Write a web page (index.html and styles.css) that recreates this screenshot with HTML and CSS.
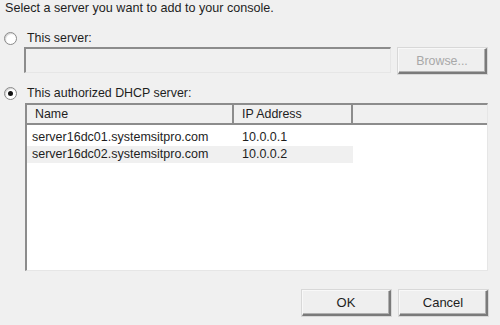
FILE: index.html
```html
<!DOCTYPE html>
<html>
<head>
<meta charset="utf-8">
<link rel="stylesheet" href="styles.css">
</head>
<body>
<div class="dialog">
  <div class="prompt">Select a server you want to add to your console.</div>

  <div class="radio-row first">
    <span class="radio"></span>
    <span class="label">This server:</span>
  </div>
  <div class="server-row">
    <div class="textbox"></div>
    <div class="btn disabled browse">Browse...</div>
  </div>

  <div class="radio-row second">
    <span class="radio checked"></span>
    <span class="label">This authorized DHCP server:</span>
  </div>

  <div class="listview">
    <div class="lv-header">
      <div class="col name">Name</div>
      <div class="col ip">IP Address</div>
      <div class="col rest"></div>
    </div>
    <div class="lv-body">
      <div class="lv-row">
        <div class="cell name">server16dc01.systemsitpro.com</div>
        <div class="cell ip">10.0.0.1</div>
      </div>
      <div class="lv-row alt">
        <div class="cell name">server16dc02.systemsitpro.com</div>
        <div class="cell ip">10.0.0.2</div>
      </div>
    </div>
  </div>

  <div class="actions">
    <div class="btn ok">OK</div>
    <div class="btn cancel">Cancel</div>
  </div>
</div>
</body>
</html>
```

FILE: styles.css
```css
html, body {
  margin: 0;
  padding: 0;
  background: #f0f0f0;
}
body {
  width: 500px;
  height: 325px;
  overflow: hidden;
  font-family: "Liberation Sans", Arial, sans-serif;
  font-size: 12.4px;
  color: #1e1e1e;
}
.dialog {
  display: flex;
  flex-direction: column;
  padding: 1px 12px 0 5px;
}
.prompt {
  line-height: 14px;
  height: 14px;
  font-size: 12.6px;
}
.radio-row {
  display: flex;
  align-items: center;
  height: 14px;
  gap: 10px;
  margin-left: -1px;
}
.radio-row.first { margin-top: 16px; }
.radio-row.second { margin-top: 12px; }
.radio {
  width: 11px;
  height: 11px;
  border-radius: 50%;
  border: 1px solid #8a8a8a;
  background: radial-gradient(circle at 60% 60%, #ffffff 55%, #e2e2e2 100%);
  box-shadow: inset 1px 1px 1px rgba(0,0,0,0.15);
  position: relative;
  flex: none;
}
.radio.checked::after {
  content: "";
  position: absolute;
  left: 3px;
  top: 3px;
  width: 5px;
  height: 5px;
  border-radius: 50%;
  background: #111;
}
.label { line-height: 14px; }

.server-row {
  display: flex;
  align-items: flex-start;
  margin-top: 1px;
  padding-left: 19px;
  gap: 7px;
}
.textbox {
  width: 364px;
  height: 23px;
  margin-top: 1px;
  border-top: 2px solid #8c8c8c;
  border-left: 2px solid #8c8c8c;
  border-right: 1px solid #e6e6e6;
  border-bottom: 1px solid #e6e6e6;
  background: #f0f0f0;
}
.btn {
  box-sizing: border-box;
  display: flex;
  align-items: center;
  justify-content: center;
  background: #efefef;
  border-top: 1px solid #f8f8f8;
  border-left: 1px solid #f8f8f8;
  border-right: 2px solid #7a7a7a;
  border-bottom: 2px solid #7a7a7a;
  box-shadow: inset -1px -1px 0 #b0b0b0, 0 0 0 1px #d8d8d8;
}
.btn.disabled { color: #a8a8a8; }
.browse {
  width: 89px;
  height: 26px;
  margin-top: 2px;
}

.listview {
  margin-top: 3px;
  margin-left: 20px;
  width: 463px;
  height: 168px;
  box-sizing: border-box;
  border-top: 2px solid #8c8c8c;
  border-left: 2px solid #8c8c8c;
  border-right: 1px solid #e6e6e6;
  border-bottom: 1px solid #e6e6e6;
  background: #ffffff;
  display: flex;
  flex-direction: column;
}
.lv-header {
  display: flex;
  height: 18px;
  background: #f0f0f0;
  border-bottom: 2px solid #8c8c8c;
}
.col {
  box-sizing: border-box;
  line-height: 18px;
  padding-left: 8px;
  border-right: 2px solid #8c8c8c;
}
.col.name { width: 207px; }
.col.ip { width: 119px; }
.col.rest { flex: 1; border-right: none; }
.lv-body {
  padding-top: 4px;
  font-size: 12.5px;
}
.lv-row {
  display: flex;
  width: 326px;
  height: 17px;
  line-height: 17px;
}
.lv-row.alt { background: #f0f0f0; }
.cell.name {
  width: 207px;
  padding-left: 5px;
  box-sizing: border-box;
}
.cell.ip {
  padding-left: 8px;
}

.actions {
  display: flex;
  justify-content: flex-end;
  gap: 8px;
  margin-top: 19px;
}
.ok, .cancel {
  width: 89px;
  height: 26px;
  font-size: 13px;
}
```
